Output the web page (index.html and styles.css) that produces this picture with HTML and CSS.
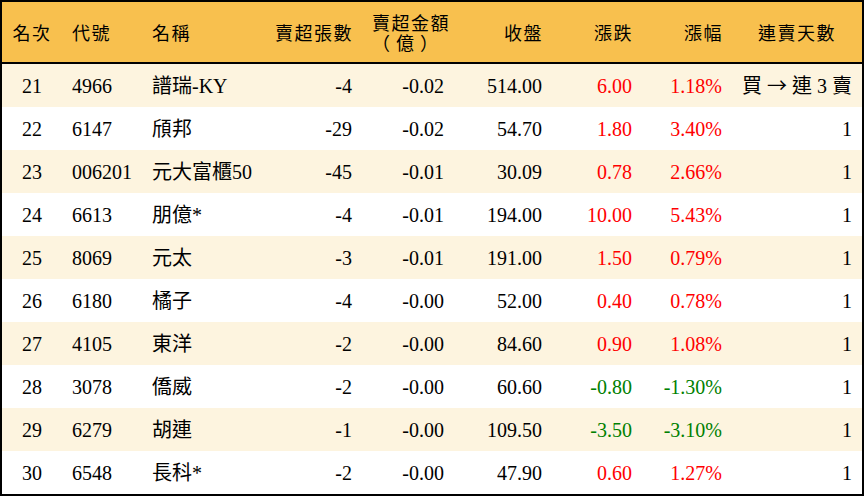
FILE: index.html
```html
<!DOCTYPE html>
<html lang="zh-Hant">
<head>
<meta charset="utf-8">
<title>賣超排行</title>
<link rel="stylesheet" href="styles.css">
</head>
<body>
<table class="rank">
  <colgroup>
    <col class="c-rank"><col class="c-code"><col class="c-name"><col class="c-vol"><col class="c-amt">
    <col class="c-close"><col class="c-chg"><col class="c-pct"><col class="c-days">
  </colgroup>
  <thead>
    <tr>
      <th class="center">名次</th>
      <th class="left">代號</th>
      <th class="left">名稱</th>
      <th class="right">賣超張數</th>
      <th class="right two-line"><span class="line">賣超金額</span><span class="line unit">（億）</span></th>
      <th class="right">收盤</th>
      <th class="right">漲跌</th>
      <th class="right">漲幅</th>
      <th class="center">連賣天數</th>
    </tr>
  </thead>
  <tbody>
    <tr><td class="center">21</td><td>4966</td><td>譜瑞-KY</td><td class="right">-4</td><td class="right">-0.02</td><td class="right">514.00</td><td class="right up">6.00</td><td class="right up">1.18%</td><td class="right">買 <span class="arrow">→</span> 連 3 賣</td></tr>
    <tr><td class="center">22</td><td>6147</td><td>頎邦</td><td class="right">-29</td><td class="right">-0.02</td><td class="right">54.70</td><td class="right up">1.80</td><td class="right up">3.40%</td><td class="right">1</td></tr>
    <tr><td class="center">23</td><td>006201</td><td>元大富櫃50</td><td class="right">-45</td><td class="right">-0.01</td><td class="right">30.09</td><td class="right up">0.78</td><td class="right up">2.66%</td><td class="right">1</td></tr>
    <tr><td class="center">24</td><td>6613</td><td>朋億*</td><td class="right">-4</td><td class="right">-0.01</td><td class="right">194.00</td><td class="right up">10.00</td><td class="right up">5.43%</td><td class="right">1</td></tr>
    <tr><td class="center">25</td><td>8069</td><td>元太</td><td class="right">-3</td><td class="right">-0.01</td><td class="right">191.00</td><td class="right up">1.50</td><td class="right up">0.79%</td><td class="right">1</td></tr>
    <tr><td class="center">26</td><td>6180</td><td>橘子</td><td class="right">-4</td><td class="right">-0.00</td><td class="right">52.00</td><td class="right up">0.40</td><td class="right up">0.78%</td><td class="right">1</td></tr>
    <tr><td class="center">27</td><td>4105</td><td>東洋</td><td class="right">-2</td><td class="right">-0.00</td><td class="right">84.60</td><td class="right up">0.90</td><td class="right up">1.08%</td><td class="right">1</td></tr>
    <tr><td class="center">28</td><td>3078</td><td>僑威</td><td class="right">-2</td><td class="right">-0.00</td><td class="right">60.60</td><td class="right down">-0.80</td><td class="right down">-1.30%</td><td class="right">1</td></tr>
    <tr><td class="center">29</td><td>6279</td><td>胡連</td><td class="right">-1</td><td class="right">-0.00</td><td class="right">109.50</td><td class="right down">-3.50</td><td class="right down">-3.10%</td><td class="right">1</td></tr>
    <tr><td class="center">30</td><td>6548</td><td>長科*</td><td class="right">-2</td><td class="right">-0.00</td><td class="right">47.90</td><td class="right up">0.60</td><td class="right up">1.27%</td><td class="right">1</td></tr>
  </tbody>
</table>
</body>
</html>
```
FILE: styles.css
```css
html, body {
  margin: 0;
  padding: 0;
  background: #ffffff;
}

.rank {
  width: 864px;
  border-collapse: separate;
  border-spacing: 0;
  table-layout: fixed;
  border: 2px solid #000000;
  font-family: "Liberation Serif", "Noto Sans CJK TC", serif;
  font-size: 20px;
  color: #000000;
}

.c-rank { width: 60px; }
.c-code { width: 80px; }
.c-name { width: 120px; }
.c-vol { width: 100px; }
.c-amt { width: 92px; }
.c-close { width: 98px; }
.c-chg { width: 90px; }
.c-pct { width: 90px; }
.c-days { width: 130px; }

.rank th {
  background: #f8c04e;
  height: 60px;
  padding: 0 10px;
  font-family: "Noto Sans CJK TC", sans-serif;
  font-weight: normal;
  font-size: 18px;
  line-height: 20px;
  letter-spacing: 1.5px;
  border-bottom: 2px solid #000000;
  vertical-align: middle;
  white-space: nowrap;
}

.rank th.right { padding-right: 9px; }

.two-line .line {
  display: block;
  line-height: 20px;
}

.two-line .unit {
  letter-spacing: 6px;
  padding-right: 1px;
}

.rank td {
  height: 43px;
  padding: 0 10px;
  vertical-align: middle;
  white-space: nowrap;
  line-height: 24px;
}

.rank tbody tr:nth-child(odd) td {
  background: #fdf4df;
}

.rank th:first-child,
.rank td:first-child {
  padding: 0;
}

.arrow {
  font-family: "Noto Sans CJK TC", sans-serif;
}

.left { text-align: left; }
.right { text-align: right; }
.center { text-align: center; }

.up { color: #ff0000; }
.down { color: #008000; }
```
